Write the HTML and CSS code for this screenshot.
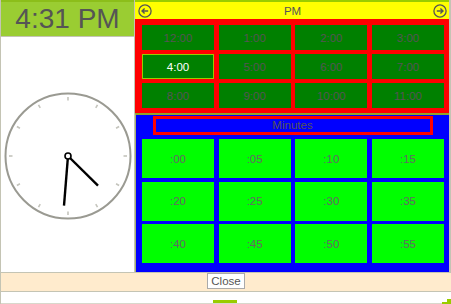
FILE: index.html
```html
<!DOCTYPE html>
<html>
<head>
<meta charset="utf-8">
<link rel="stylesheet" href="styles.css">
</head>
<body>
<div class="picker">
  <div class="main">
    <div class="left">
      <div class="time">4:31 PM</div>
      <div class="clock-wrap">
        <svg class="clock" width="130" height="130" viewBox="0 0 130 130">
          <circle cx="65" cy="65" r="62.5" fill="#fff" stroke="#9a9a92" stroke-width="2"/>
          <g stroke="#c4c4bc" stroke-width="1.6">
            <line x1="65" y1="6" x2="65" y2="9.5"/>
            <line x1="65" y1="120.5" x2="65" y2="124"/>
            <line x1="6" y1="65" x2="9.5" y2="65"/>
            <line x1="120.5" y1="65" x2="124" y2="65"/>
            <line x1="94.5" y1="13.9" x2="92.75" y2="16.94"/>
            <line x1="35.5" y1="13.9" x2="37.25" y2="16.94"/>
            <line x1="94.5" y1="116.1" x2="92.75" y2="113.06"/>
            <line x1="35.5" y1="116.1" x2="37.25" y2="113.06"/>
            <line x1="116.1" y1="35.5" x2="113.06" y2="37.25"/>
            <line x1="13.9" y1="35.5" x2="16.94" y2="37.25"/>
            <line x1="116.1" y1="94.5" x2="113.06" y2="92.75"/>
            <line x1="13.9" y1="94.5" x2="16.94" y2="92.75"/>
          </g>
          <line x1="65" y1="65" x2="95" y2="94.6" stroke="#000" stroke-width="2.4" stroke-linecap="butt"/>
          <line x1="65" y1="65" x2="61" y2="114.6" stroke="#000" stroke-width="2.4" stroke-linecap="butt"/>
          <circle cx="65" cy="65" r="3" fill="#fff" stroke="#000" stroke-width="1.6"/>
        </svg>
      </div>
    </div>
    <div class="right">
      <div class="hours">
        <div class="ampm">
          <svg class="arrow" width="14" height="14" viewBox="0 0 14 14">
            <circle cx="7" cy="7" r="6.1" fill="none" stroke="#555" stroke-width="1.3"/>
            <path d="M10.2 7 H4 M6.6 4.4 L4 7 L6.6 9.6" fill="none" stroke="#555" stroke-width="1.4"/>
          </svg>
          <span class="ampm-label">PM</span>
          <svg class="arrow" width="14" height="14" viewBox="0 0 14 14">
            <circle cx="7" cy="7" r="6.1" fill="none" stroke="#555" stroke-width="1.3"/>
            <path d="M3.8 7 H10 M7.4 4.4 L10 7 L7.4 9.6" fill="none" stroke="#555" stroke-width="1.4"/>
          </svg>
        </div>
        <div class="hour-grid">
          <div class="hour">12:00</div>
          <div class="hour">1:00</div>
          <div class="hour">2:00</div>
          <div class="hour">3:00</div>
          <div class="hour selected">4:00</div>
          <div class="hour">5:00</div>
          <div class="hour">6:00</div>
          <div class="hour">7:00</div>
          <div class="hour">8:00</div>
          <div class="hour">9:00</div>
          <div class="hour">10:00</div>
          <div class="hour">11:00</div>
        </div>
      </div>
      <div class="minutes">
        <div class="min-title">Minutes</div>
        <div class="min-grid">
          <div class="minute">:00</div>
          <div class="minute">:05</div>
          <div class="minute">:10</div>
          <div class="minute">:15</div>
          <div class="minute">:20</div>
          <div class="minute">:25</div>
          <div class="minute">:30</div>
          <div class="minute">:35</div>
          <div class="minute">:40</div>
          <div class="minute">:45</div>
          <div class="minute">:50</div>
          <div class="minute">:55</div>
        </div>
      </div>
    </div>
  </div>
  <div class="footer"><button class="close">Close</button></div>
  <div class="bottom"><span class="grip-mid"></span><span class="grip-corner"></span></div>
</div>
</body>
</html>
```
FILE: styles.css
```css
html, body {
  margin: 0;
  padding: 0;
  background: #fff;
}
body {
  font-family: "Liberation Sans", Arial, sans-serif;
}
.picker {
  width: 451px;
  height: 304px;
  box-sizing: border-box;
  border-left: 1px solid #c4c4b4;
  display: flex;
  flex-direction: column;
  position: relative;
}
.main {
  display: flex;
  height: 272px;
}
.left {
  width: 133px;
  border-right: 1px solid #c4c4b4;
  display: flex;
  flex-direction: column;
}
.time {
  height: 34px;
  border-top: 2px solid #8cbe1a;
  border-bottom: 1px solid #c4c4b4;
  background: #9acd32;
  color: #555;
  font-size: 28px;
  line-height: 34px;
  text-align: center;
}
.clock-wrap {
  flex: 1;
  display: flex;
  align-items: center;
  justify-content: center;
  padding-top: 2px;
}
.clock {
  display: block;
}
.right {
  width: 316px;
  box-sizing: border-box;
  border-right: 2px solid #c4c4b4;
  display: flex;
  flex-direction: column;
}
.hours {
  border-top: 2px solid #99cc00;
  background: #ff0000;
}
.ampm {
  height: 17px;
  background: #ffff00;
  display: flex;
  align-items: center;
  justify-content: space-between;
  padding: 0 2px 0 3px;
}
.arrow {
  display: block;
}
.ampm-label {
  color: #555;
  font-size: 11.5px;
}
.hour-grid {
  display: grid;
  grid-template-columns: repeat(4, 1fr);
  grid-auto-rows: 25px;
  column-gap: 4.67px;
  row-gap: 4px;
  padding: 6px 5px 5px 7px;
}
.hour {
  background: #008000;
  color: #555;
  font-size: 11.5px;
  display: flex;
  align-items: center;
  justify-content: center;
  box-sizing: border-box;
}
.hour.selected {
  color: #fff;
  border: 1px solid #99cc00;
}
.minutes {
  flex: 1;
  background: #0000ff;
  border-top: 2px solid #8fa52a;
  border-left: 1px solid #a8b070;
}
.min-title {
  width: 280px;
  height: 19px;
  box-sizing: border-box;
  margin: 1px auto 0;
  border: 3px solid #ff0000;
  color: #555;
  font-size: 11.5px;
  line-height: 13px;
  text-align: center;
}
.min-grid {
  display: grid;
  grid-template-columns: repeat(4, 1fr);
  grid-auto-rows: 39px;
  column-gap: 4.67px;
  row-gap: 3.5px;
  padding: 4px 5px 0 6px;
}
.minute {
  background: #00ff00;
  color: #666;
  font-size: 11.5px;
  display: flex;
  align-items: center;
  justify-content: center;
}
.footer {
  height: 20px;
  box-sizing: border-box;
  border-top: 1px solid #c4c4b4;
  border-bottom: 1px solid #c4c4b4;
  background: #ffebcd;
  display: flex;
  justify-content: center;
  align-items: flex-start;
}
.close {
  height: 16px;
  margin: 0;
  padding: 0 3px;
  font-family: "Liberation Sans", Arial, sans-serif;
  font-size: 11.5px;
  line-height: 14px;
  color: #555;
  background: #fff;
  border: 1px solid #aaa;
  border-radius: 0;
}
.bottom {
  flex: 1;
  display: flex;
  justify-content: center;
  align-items: flex-end;
  border-bottom: 1px solid #d8d8cc;
}
.grip-mid {
  width: 24px;
  height: 3px;
  background: #99cc00;
  margin-right: 2px;
}
.grip-corner {
  position: absolute;
  right: 0;
  bottom: 0;
  width: 5px;
  height: 3px;
  border-right: 4px solid #99cc00;
  border-bottom: 2px solid #99cc00;
}
```
